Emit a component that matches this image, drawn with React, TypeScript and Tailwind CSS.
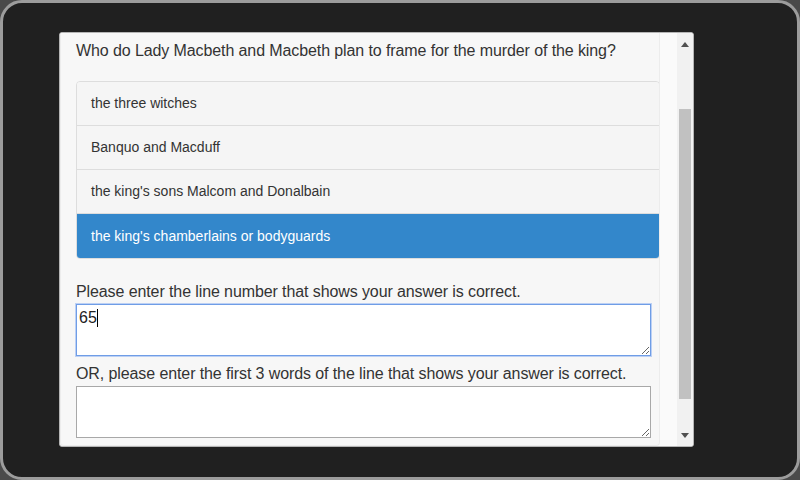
const choices = [
  'the three witches',
  'Banquo and Macduff',
  "the king's sons Malcom and Donalbain",
  "the king's chamberlains or bodyguards",
];

const selected = 3;

export default function App() {
  return (
    <div
      className="w-[800px] h-[480px] bg-[#4a4a4a] overflow-hidden"
      style={{ fontFamily: '"Liberation Sans", Arial, Helvetica, sans-serif' }}
    >
      <div className="w-[800px] h-[480px] rounded-[22px] border-[3px] border-[#9c9c9c] bg-[#202020] pl-[56px] pt-[29px]">
        <div className="w-[635px] h-[415px] border border-[#b5b5b5] rounded-[3px] bg-[#fafafa] flex overflow-hidden">
          {/* scrolled content */}
          <div className="w-[600px] h-full rounded-b-[4px] border-x border-b border-[#ececec] bg-[#f7f7f7] pl-[15px] pr-0 overflow-hidden">
            <p className="mt-[7px] text-[16px] leading-[22px] tracking-[-0.1px] text-[#333] whitespace-nowrap">
              Who do Lady Macbeth and Macbeth plan to frame for the murder of the king?
            </p>
            <div className="mt-[19px] w-[584px] rounded-[4px] border border-[#dddddd] overflow-hidden">
              {choices.map((c, i) => (
                <div
                  key={c}
                  className={
                    i === selected
                      ? 'h-[44px] flex items-center px-[14px] text-[14px] text-white bg-[#3387cb]'
                      : 'h-[44px] flex items-center px-[14px] text-[14px] text-[#333] bg-[#f5f5f5] border-b border-[#dddddd]'
                  }
                >
                  {c}
                </div>
              ))}
            </div>

            <p className="mt-[23px] text-[16px] leading-[20px] tracking-[-0.1px] text-[#333] whitespace-nowrap">
              Please enter the line number that shows your answer is correct.
            </p>
            <div className="relative mt-[2px] w-[575px] h-[52px]">
              <textarea
                readOnly
                defaultValue="65"
                className="block w-full h-full resize-y bg-white border border-[#6f9de6] shadow-[0_0_0_1px_#bcd0f4] px-[2px] pt-[3px] text-[16px] leading-[20px] text-[#222] outline-none"
              />
              <span className="absolute left-[21px] top-[5px] w-[1px] h-[18px] bg-black" />
            </div>

            <p className="mt-[8px] text-[16px] leading-[20px] tracking-[-0.1px] text-[#333] whitespace-nowrap">
              OR, please enter the first 3 words of the line that shows your answer is correct.
            </p>
            <textarea
              readOnly
              className="block mt-[2px] w-[575px] h-[52px] resize-y bg-white border border-[#a8a8a8] outline-none"
            />
          </div>

          <div className="w-[17px]" />

          {/* scrollbar */}
          <div className="w-[16px] h-full bg-[#f1f1f1] flex flex-col items-center">
            <div className="h-[20px] flex items-center justify-center mt-[1px]">
              <svg width="8" height="5" viewBox="0 0 8 5">
                <path d="M4 0 L8 5 L0 5 Z" fill="#505050" />
              </svg>
            </div>
            <div className="mt-[55px] w-[12px] h-[290px] bg-[#c1c1c1]" />
            <div className="flex-1" />
            <div className="h-[20px] flex items-center justify-center mb-[1px]">
              <svg width="8" height="5" viewBox="0 0 8 5">
                <path d="M0 0 L8 0 L4 5 Z" fill="#505050" />
              </svg>
            </div>
          </div>
        </div>
      </div>
    </div>
  );
}
